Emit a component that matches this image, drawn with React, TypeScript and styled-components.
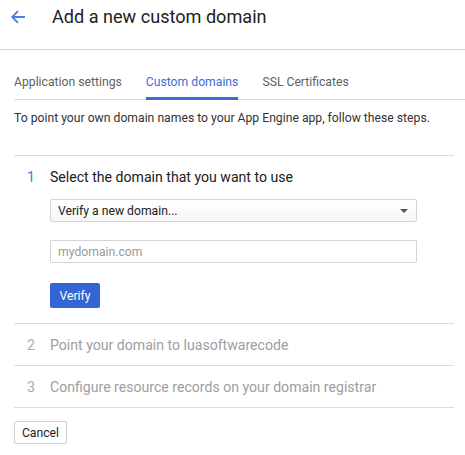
import React, { useState } from 'react';

import styled, { createGlobalStyle } from 'styled-components';

const GlobalStyle = createGlobalStyle`
  body {
    margin: 0;
    background: #fff;
    font-family: Roboto, 'Liberation Sans', Arial, sans-serif;
    color: #212121;
  }
`;

const steps = [
  { id: 1, title: 'Select the domain that you want to use' },
  { id: 2, title: 'Point your domain to luasoftwarecode' },
  { id: 3, title: 'Configure resource records on your domain registrar' },
];

const tabs = ['Application settings', 'Custom domains', 'SSL Certificates'];

function App() {
  const [activeTab, setActiveTab] = useState(1);
  const [domain, setDomain] = useState('');

  return (
    <Page>
      <GlobalStyle />
      <Header>
        <BackButton aria-label="Back">
          <svg width="16" height="16" viewBox="0 0 16 16">
            <path
              d="M15 8H2.5M8 2.2L2.2 8L8 13.8"
              fill="none"
              stroke="#4a7fe0"
              strokeWidth="1.8"
            />
          </svg>
        </BackButton>
        <Title>Add a new custom domain</Title>
      </Header>

      <Body>
        <TabBar>
          {tabs.map((tab, i) => (
            <Tab key={tab} $active={i === activeTab} onClick={() => setActiveTab(i)}>
              {tab}
            </Tab>
          ))}
        </TabBar>

        <Intro>
          To point your own domain names to your App Engine app, follow these
          steps.
        </Intro>

        <StepList>
          {steps.map((step) => (
            <Step key={step.id}>
              <StepHead>
                <StepNumber $active={step.id === 1}>{step.id}</StepNumber>
                <StepTitle $active={step.id === 1}>{step.title}</StepTitle>
              </StepHead>
              {step.id === 1 && (
                <StepBody>
                  <Select>
                    <span>Verify a new domain...</span>
                    <Caret />
                  </Select>
                  <TextInput
                    type="text"
                    placeholder="mydomain.com"
                    value={domain}
                    onChange={(e) => setDomain(e.target.value)}
                  />
                  <PrimaryButton>Verify</PrimaryButton>
                </StepBody>
              )}
            </Step>
          ))}
        </StepList>

        <SecondaryButton>Cancel</SecondaryButton>
      </Body>
    </Page>
  );
}

const Page = styled.div`
  width: 465px;
  height: 455px;
  overflow: hidden;
`;

const Header = styled.div`
  height: 50px;
  display: flex;
  align-items: center;
  border-bottom: 1px solid #d4d4d4;
  box-sizing: border-box;
  padding-bottom: 16px;
`;

const BackButton = styled.button`
  width: 16px;
  height: 16px;
  margin-left: 10px;
  margin-right: 26px;
  padding: 0;
  border: none;
  background: none;
  display: flex;
  cursor: pointer;
`;

const Title = styled.h1`
  margin: 0;
  font-size: 18.1px;
  font-weight: 400;
  color: #212121;
  line-height: 22px;
`;

const Body = styled.div`
  padding-left: 14px;
`;

const TabBar = styled.div`
  display: flex;
  gap: 24px;
  margin-top: 25px;
  border-bottom: 1px solid #dcdcdc;
`;

const Tab = styled.div<{ $active: boolean }>`
  font-size: 12.2px;
  line-height: 15px;
  padding-bottom: 7px;
  margin-bottom: -1px;
  color: ${(p) => (p.$active ? '#3f6ad8' : '#5f5f5f')};
  border-bottom: 3px solid ${(p) => (p.$active ? '#3f6ad8' : 'transparent')};
  cursor: pointer;
`;

const Intro = styled.p`
  margin: 11px 0 0;
  font-size: 12.2px;
  line-height: 15px;
  color: #333;
  padding-bottom: 29px;
  margin-right: 11px;
  border-bottom: 1px solid #dcdcdc;
  white-space: nowrap;
`;

const StepList = styled.div`
  margin-right: 11px;
`;

const Step = styled.div`
  border-bottom: 1px solid #dcdcdc;
`;

const StepHead = styled.div`
  display: flex;
  align-items: center;
  height: 41px;
`;

const StepNumber = styled.div<{ $active: boolean }>`
  width: 36px;
  padding-left: 13px;
  box-sizing: border-box;
  font-size: 14.1px;
  color: ${(p) => (p.$active ? '#4a7ad6' : '#aaa')};
`;

const StepTitle = styled.div<{ $active: boolean }>`
  font-size: 14.1px;
  color: ${(p) => (p.$active ? '#212121' : '#9e9e9e')};
`;

const StepBody = styled.div`
  padding-left: 36px;
  padding-right: 37px;
  padding-bottom: 15px;
  display: flex;
  flex-direction: column;
  align-items: flex-start;
`;

const Select = styled.div`
  margin-top: 2px;
  width: 100%;
  height: 23px;
  box-sizing: border-box;
  border: 1px solid #d6d6d6;
  border-radius: 2px;
  background: linear-gradient(#fff, #f6f6f6);
  display: flex;
  align-items: center;
  justify-content: space-between;
  padding: 0 8px 0 7px;
  font-size: 12.2px;
  color: #222;
`;

const Caret = styled.span`
  width: 0;
  height: 0;
  border-left: 4.5px solid transparent;
  border-right: 4.5px solid transparent;
  border-top: 4.5px solid #555;
`;

const TextInput = styled.input`
  margin-top: 18px;
  width: 100%;
  height: 23px;
  box-sizing: border-box;
  border: 1px solid #d6d6d6;
  border-radius: 1px;
  padding: 0 7px;
  font-family: Roboto, 'Liberation Sans', Arial, sans-serif;
  font-size: 12.2px;
  color: #222;
  outline: none;

  &::placeholder {
    color: #9a9a9a;
  }
`;

const PrimaryButton = styled.button`
  margin-top: 20px;
  width: 50px;
  height: 25px;
  border: none;
  border-radius: 2px;
  background: #3266d4;
  color: #fff;
  font-family: Roboto, 'Liberation Sans', Arial, sans-serif;
  font-size: 12.2px;
  padding: 0;
  cursor: pointer;
`;

const SecondaryButton = styled.button`
  margin-top: 13px;
  width: 53px;
  height: 23px;
  box-sizing: border-box;
  border: 1px solid #d0d0d0;
  border-radius: 2px;
  background: #fff;
  color: #222;
  font-family: Roboto, 'Liberation Sans', Arial, sans-serif;
  font-size: 12.2px;
  padding: 0;
  cursor: pointer;
`;

export default App;
